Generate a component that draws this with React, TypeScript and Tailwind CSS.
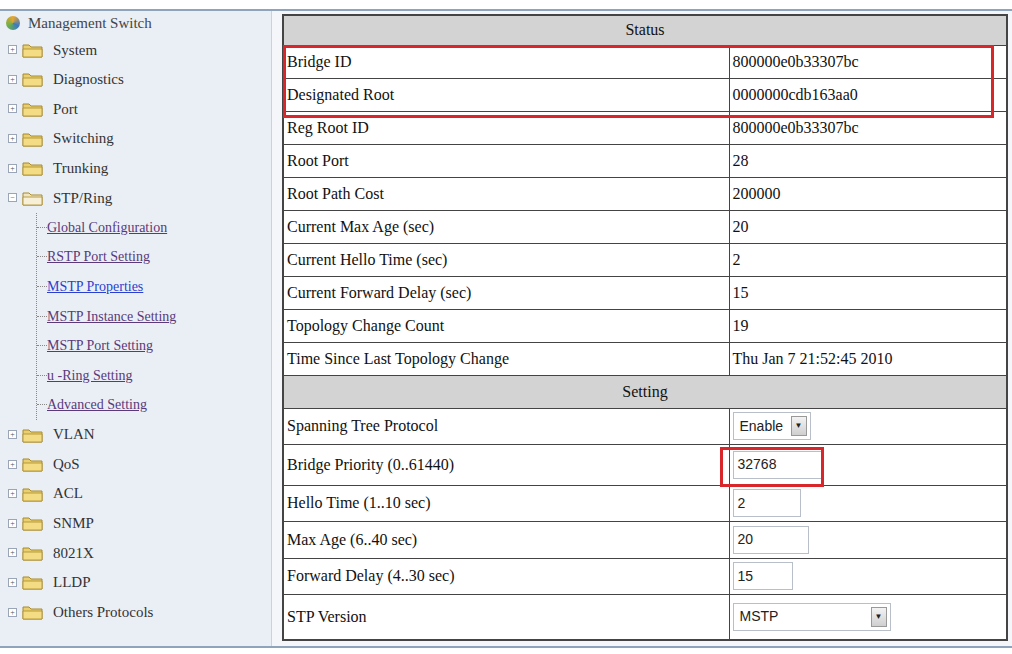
import React from 'react';

const serif = { fontFamily: '"Liberation Serif", "Times New Roman", serif' };

const Folder = ({ open = false }: { open?: boolean }) => (
  <svg width="22" height="18" viewBox="0 0 22 18" className="shrink-0">
    <path d="M1 4 h6 l2 2 h11 v10 h-19 z" fill={open ? '#f1e6c3' : '#e9cf6f'} stroke="#a88a2a" strokeWidth="1" />
    <path d="M1 8 h19 v8 h-19 z" fill={open ? '#f7efd6' : '#f3dc84'} stroke="#a88a2a" strokeWidth="0.8" />
  </svg>
);

const PlusBox = ({ minus = false }: { minus?: boolean }) => (
  <span className="w-[9px] h-[9px] border border-[#9aa5b5] bg-white text-[8px] leading-[7px] text-center text-gray-600 shrink-0">
    {minus ? '−' : '+'}
  </span>
);

const topItems = ['System', 'Diagnostics', 'Port', 'Switching', 'Trunking'];
const subItems = ['Global Configuration', 'RSTP Port Setting', 'MSTP Properties', 'MSTP Instance Setting', 'MSTP Port Setting', 'u -Ring Setting', 'Advanced Setting'];
const bottomItems = ['VLAN', 'QoS', 'ACL', 'SNMP', '8021X', 'LLDP', 'Others Protocols'];

const statusRows = [
  ['Bridge ID', '800000e0b33307bc'],
  ['Designated Root', '0000000cdb163aa0'],
  ['Reg Root ID', '800000e0b33307bc'],
  ['Root Port', '28'],
  ['Root Path Cost', '200000'],
  ['Current Max Age (sec)', '20'],
  ['Current Hello Time (sec)', '2'],
  ['Current Forward Delay (sec)', '15'],
  ['Topology Change Count', '19'],
  ['Time Since Last Topology Change', 'Thu Jan 7 21:52:45 2010'],
];

const TreeRow = ({ label, minus = false }: { label: string; minus?: boolean }) => (
  <div className="h-[29.6px] flex items-center gap-[5px] pl-[8px] text-[15px] text-[#333]">
    <PlusBox minus={minus} />
    <Folder open={minus} />
    <span className="ml-[4px]">{label}</span>
  </div>
);

const Sidebar = () => (
  <div className="w-[272px] shrink-0 bg-[#eaeff6] border-r border-[#c9d3e0]" style={serif}>
    <div className="h-[24px] flex items-center gap-[8px] pl-[6px] text-[15px] text-[#444]">
      <span className="w-[14px] h-[14px] rounded-full bg-[conic-gradient(#e8a530,#3b78c4,#6bb04a,#e8a530)]" />
      Management Switch
    </div>
    {topItems.map(t => <TreeRow key={t} label={t} />)}
    <TreeRow label="STP/Ring" minus />
    <div className="ml-[36px] border-l border-dotted border-[#888]">
      {subItems.map((s, i) => (
        <div key={s} className="h-[29.6px] flex items-center text-[14px]">
          <span className="w-[10px] border-t border-dotted border-[#888]" />
          <span className={`underline ${i === 2 ? 'text-[#2a3fd0]' : 'text-[#5a3a7a]'}`}>{s}</span>
        </div>
      ))}
    </div>
    {bottomItems.map(t => <TreeRow key={t} label={t} />)}
  </div>
);

const Input = ({ value, w }: { value: string; w: string }) => (
  <div className={`${w} h-[28px] border border-[#b8bfc8] bg-white px-[4px] flex items-center text-[14px] text-[#222]`} style={{ fontFamily: '"Liberation Sans", Arial, sans-serif' }}>
    {value}
  </div>
);

const Select = ({ value, w }: { value: string; w: string }) => (
  <div className={`${w} h-[28px] border border-[#b8bfc8] bg-white pl-[6px] pr-[3px] flex items-center justify-between text-[14px] text-[#222]`} style={{ fontFamily: '"Liberation Sans", Arial, sans-serif' }}>
    {value}
    <span className="w-[16px] h-[20px] bg-gradient-to-b from-[#f3f3f3] to-[#cfcfcf] border border-[#999] text-[8px] flex items-center justify-center">▼</span>
  </div>
);

export default function App() {
  const cell = 'border border-[#444] px-[3px] text-[16px] text-[#111]';
  return (
    <div className="w-[1012px] h-[654px] bg-white pt-[9px] pb-[6px]">
      <div className="h-full flex border-t-2 border-b-2 border-[#8fa3bd] bg-[#f4f6f9]">
        <Sidebar />
        <div className="flex-1 pl-[10px] pr-[4px] pt-[3px]" style={serif}>
          <div className="relative">
            <table className="w-[726px] border-collapse border-2 border-[#444]">
              <tbody>
                <tr className="h-[30px]">
                  <td colSpan={2} className={`${cell} bg-[#d3d3d3] text-center`}>Status</td>
                </tr>
                {statusRows.map(([k, v]) => (
                  <tr key={k} className="h-[33px] bg-white">
                    <td className={`${cell} w-[446px]`}>{k}</td>
                    <td className={cell}>{v}</td>
                  </tr>
                ))}
                <tr className="h-[33px]">
                  <td colSpan={2} className={`${cell} bg-[#d3d3d3] text-center`}>Setting</td>
                </tr>
                <tr className="h-[36px] bg-white">
                  <td className={cell}>Spanning Tree Protocol</td>
                  <td className={cell}><Select value="Enable" w="w-[78px]" /></td>
                </tr>
                <tr className="h-[41px] bg-white">
                  <td className={cell}>Bridge Priority (0..61440)</td>
                  <td className={cell}><div className="w-[92px]"><Input value="32768" w="w-[90px]" /></div></td>
                </tr>
                <tr className="h-[36px] bg-white">
                  <td className={cell}>Hello Time (1..10 sec)</td>
                  <td className={cell}><Input value="2" w="w-[68px]" /></td>
                </tr>
                <tr className="h-[37px] bg-white">
                  <td className={cell}>Max Age (6..40 sec)</td>
                  <td className={cell}><Input value="20" w="w-[76px]" /></td>
                </tr>
                <tr className="h-[36px] bg-white">
                  <td className={cell}>Forward Delay (4..30 sec)</td>
                  <td className={cell}><Input value="15" w="w-[60px]" /></td>
                </tr>
                <tr className="h-[46px] bg-white">
                  <td className={cell}>STP Version</td>
                  <td className={cell}><Select value="MSTP" w="w-[158px]" /></td>
                </tr>
              </tbody>
            </table>
            <div className="absolute left-[1px] top-[31px] w-[711px] h-[73px] border-[3px] border-[#d9262a] pointer-events-none" />
            <div className="absolute left-[438px] top-[433px] w-[104px] h-[40px] border-[3px] border-[#d9262a] pointer-events-none" />
          </div>
        </div>
      </div>
    </div>
  );
}
